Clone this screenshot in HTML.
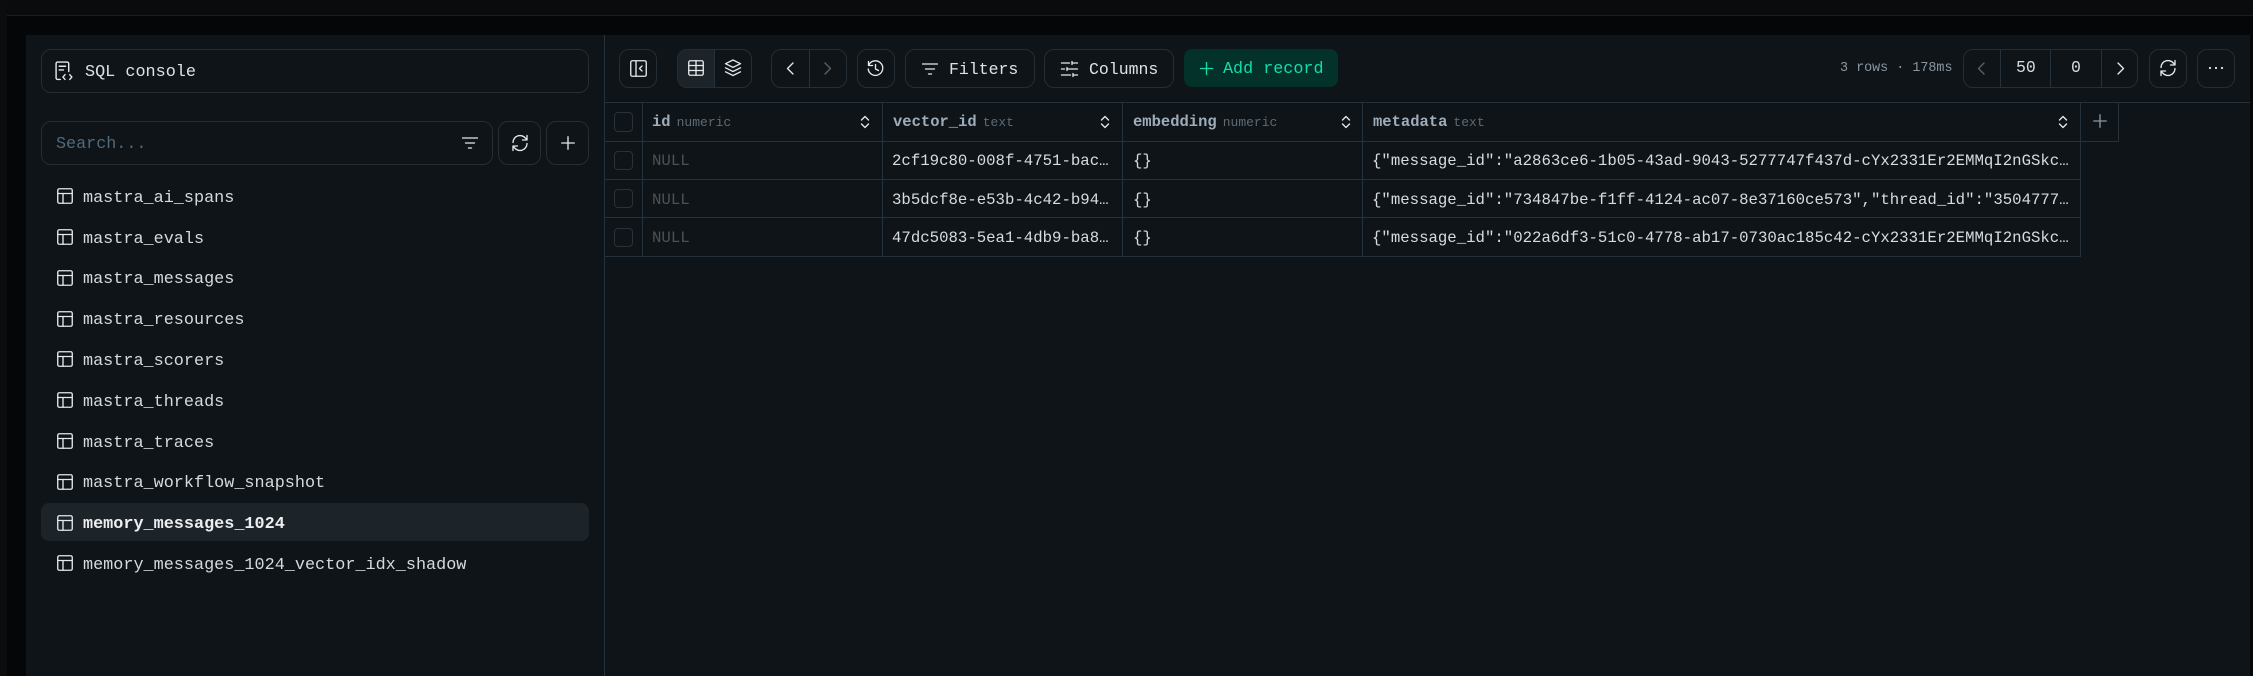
<!DOCTYPE html>
<html lang="en">
<head>
<meta charset="utf-8">
<title>Database</title>
<style>
html,body{margin:0;padding:0;width:2253px;height:676px;overflow:hidden;background:#050608}
body{position:relative;font-family:"Liberation Mono",monospace;color:#e3e6e8}
.a{position:absolute;box-sizing:border-box}
.t{position:absolute;white-space:pre;line-height:24px;height:24px}
.side{font-size:16.82px;color:#d6dadd;margin-top:1.5px}
.b{position:absolute;box-sizing:border-box;border:1.5px solid #232e37;border-radius:10px}
.ln{position:absolute;background:#25313b}
.ic{position:absolute;overflow:visible;fill:none;stroke:#e6e8ea;stroke-width:1.35;stroke-linecap:round;stroke-linejoin:round}
.th{font-size:15.5px;font-weight:bold;color:#9fadb9;margin-top:1px}
.th span{font-size:13px;font-weight:normal;color:#5c6a75;margin-left:6px}
.td{font-size:15.7px;color:#d8dcdf;margin-top:1px}
.nul{font-size:15.7px;color:#4c5154;margin-top:1px}
.cb{position:absolute;box-sizing:border-box;width:19px;height:19px;border:1.5px solid #27323c;border-radius:4px}
</style>
</head>
<body>
<svg width="0" height="0" style="position:absolute">
<defs>
<symbol id="tb" viewBox="0 0 16 16"><rect x=".75" y=".75" width="14.5" height="14.5" rx="1.5"/><path d="M.75 5.5h14.5M6 5.5v9.75"/></symbol>
<symbol id="rf" viewBox="0 0 18 18"><path d="M2 8.5A7 7 0 0 1 14.5 4.2L16 5.8M16 1.5v4.5h-4.5M16 9.5A7 7 0 0 1 3.5 13.8L2 12.2M2 16.5V12h4.5"/></symbol>
<symbol id="fl" viewBox="0 0 16 12"><path d="M.5 1h15M3.5 6h9M6.5 11h3"/></symbol>
<symbol id="so" viewBox="0 0 10 14"><path d="M1.500 5l3.500-3.500L8.500 5M1.500 9l3.500 3.500L8.500 9"/></symbol>
</defs>
</svg>

<!-- shell -->
<div class="a" style="left:0;top:0;width:7px;height:676px;background:#0c0c0d"></div>
<div class="a" style="left:7px;top:0;width:2246px;height:15px;background:#0a0b0d"></div>
<div class="a" style="left:7px;top:15px;width:2246px;height:1px;background:#1c1d20"></div>
<div class="a" style="left:26px;top:35px;width:2224px;height:641px;background:#0e1418"></div>
<div class="ln" style="left:604px;top:35px;width:1px;height:641px"></div>

<!-- sidebar -->
<div class="b" style="left:41px;top:49px;width:548px;height:44px"></div>
<svg class="ic" style="left:55px;top:61px" width="19" height="20" viewBox="0 0 18 19"><path d="M5 17.500H2.500a1.500 1.500 0 0 1-1.500-1.500V2.500A1.500 1.500 0 0 1 2.500 1h9A1.500 1.500 0 0 1 13 2.500V10M4 5h6M4 8.500h4M9.500 13l-2 2.250 2 2.250M14 13l2 2.250-2 2.250"/></svg>
<div class="t side" style="left:85px;top:59px;color:#dfe2e4">SQL console</div>

<div class="b" style="left:41px;top:121px;width:452px;height:44px"></div>
<div class="t" style="left:56px;top:133px;font-size:16.75px;color:#4f6a7e">Search...</div>
<svg class="ic" style="left:462px;top:137px" width="16" height="12"><use href="#fl"/></svg>
<div class="b" style="left:498px;top:121px;width:43px;height:44px"></div>
<svg class="ic" style="left:511px;top:134px" width="18" height="18"><use href="#rf"/></svg>
<div class="b" style="left:546px;top:121px;width:43px;height:44px"></div>
<svg class="ic" style="left:561px;top:136px" width="14" height="14" viewBox="0 0 14 14"><path d="M7 .75v12.500M.75 7h12.500"/></svg>

<div class="a" style="left:41px;top:503px;width:548px;height:38px;background:#1c2329;border-radius:8px"></div>

<svg class="ic" style="left:57px;top:188px" width="16" height="16"><use href="#tb"/></svg><div class="t side" style="left:83px;top:185px">mastra_ai_spans</div>
<svg class="ic" style="left:57px;top:229px" width="16" height="16"><use href="#tb"/></svg><div class="t side" style="left:83px;top:226px">mastra_evals</div>
<svg class="ic" style="left:57px;top:270px" width="16" height="16"><use href="#tb"/></svg><div class="t side" style="left:83px;top:266px">mastra_messages</div>
<svg class="ic" style="left:57px;top:311px" width="16" height="16"><use href="#tb"/></svg><div class="t side" style="left:83px;top:307px">mastra_resources</div>
<svg class="ic" style="left:57px;top:351px" width="16" height="16"><use href="#tb"/></svg><div class="t side" style="left:83px;top:348px">mastra_scorers</div>
<svg class="ic" style="left:57px;top:392px" width="16" height="16"><use href="#tb"/></svg><div class="t side" style="left:83px;top:389px">mastra_threads</div>
<svg class="ic" style="left:57px;top:433px" width="16" height="16"><use href="#tb"/></svg><div class="t side" style="left:83px;top:430px">mastra_traces</div>
<svg class="ic" style="left:57px;top:474px" width="16" height="16"><use href="#tb"/></svg><div class="t side" style="left:83px;top:470px">mastra_workflow_snapshot</div>
<svg class="ic" style="left:57px;top:515px" width="16" height="16"><use href="#tb"/></svg><div class="t side" style="left:83px;top:511px;font-weight:bold;color:#eceef0">memory_messages_1024</div>
<svg class="ic" style="left:57px;top:555px" width="16" height="16"><use href="#tb"/></svg><div class="t side" style="left:83px;top:552px">memory_messages_1024_vector_idx_shadow</div>

<!-- toolbar -->
<div class="b" style="left:619px;top:49px;width:38px;height:39px"></div>
<svg class="ic" style="left:630px;top:60px" width="17" height="17" viewBox="0 0 17 17"><rect x=".75" y=".75" width="15.500" height="15.500" rx="1.500"/><path d="M6 .75v15.500M12 6l-2.500 2.500 2.500 2.500"/></svg>

<div class="b" style="left:677px;top:49px;width:75px;height:39px"></div>
<div class="a" style="left:678px;top:50px;width:37px;height:37px;background:#1c2329;border-radius:9px 0 0 9px"></div>
<div class="ln" style="left:714px;top:50px;width:1px;height:37px"></div>
<svg class="ic" style="left:688px;top:60px" width="16" height="16" viewBox="0 0 16 16"><rect x=".75" y=".75" width="14.500" height="14.500" rx="1.500"/><path d="M.75 5.500h14.500M.75 10.500h14.500M8 .75v14.500"/></svg>
<svg class="ic" style="left:724px;top:59px" width="18" height="18" viewBox="0 0 18 18"><path d="M9 1l7.500 3.700L9 8.400 1.500 4.700zM1.500 8.800L9 12.500l7.500-3.700M1.500 12.800L9 16.500l7.500-3.700"/></svg>

<div class="b" style="left:771px;top:49px;width:76px;height:39px"></div>
<div class="ln" style="left:809px;top:50px;width:1px;height:37px"></div>
<svg class="ic" style="left:786px;top:62px" width="9" height="13" viewBox="0 0 9 13"><path d="M7 1L1.500 6.500 7 12"/></svg>
<svg class="ic" style="left:823px;top:62px;stroke:#5b6165" width="9" height="13" viewBox="0 0 9 13"><path d="M2 1l5.500 5.500L2 12"/></svg>

<div class="b" style="left:857px;top:49px;width:38px;height:39px"></div>
<svg class="ic" style="left:867px;top:60px" width="17" height="17" viewBox="0 0 17 17"><path d="M1.500 1.500v4h4M1.700 5.300A7.300 7.300 0 1 1 1.200 9M8.500 4.500v4.500l3 1.500"/></svg>

<div class="b" style="left:905px;top:49px;width:130px;height:39px"></div>
<svg class="ic" style="left:922px;top:63px" width="16" height="12"><use href="#fl"/></svg>
<div class="t" style="left:949px;top:58px;font-size:16.5px;color:#e0e3e5">Filters</div>

<div class="b" style="left:1044px;top:49px;width:130px;height:39px"></div>
<svg class="ic" style="left:1061px;top:61px" width="17" height="16" viewBox="0 0 17 16"><path d="M.5 2h8M12 2h4.500M11 .5v3M.5 8h3M7 8h9.500M6 6.500v3M.5 14h9M13 14h3.500M12 12.500v3"/></svg>
<div class="t" style="left:1089px;top:58px;font-size:16.5px;color:#e0e3e5">Columns</div>

<div class="a" style="left:1184px;top:49px;width:154px;height:38px;background:#02322a;border-radius:8px"></div>
<svg class="ic" style="left:1200px;top:62px;stroke:#14dcaa" width="13" height="13" viewBox="0 0 13 13"><path d="M6.500 .5v12M.5 6.500h12"/></svg>
<div class="t" style="left:1223px;top:58px;font-size:16.75px;color:#14dcaa">Add record</div>

<div class="t" style="left:1840px;top:57px;font-size:13.4px;color:#8a96a0">3 rows · 178ms</div>

<div class="b" style="left:1963px;top:49px;width:175px;height:39px"></div>
<div class="ln" style="left:2000px;top:50px;width:1px;height:37px"></div>
<div class="ln" style="left:2050px;top:50px;width:1px;height:37px"></div>
<div class="ln" style="left:2101px;top:50px;width:1px;height:37px"></div>
<svg class="ic" style="left:1977px;top:62px;stroke:#5b6165" width="9" height="13" viewBox="0 0 9 13"><path d="M7 1L1.500 6.500 7 12"/></svg>
<div class="t" style="left:2016px;top:56px;font-size:16.5px;color:#d8dcdf">50</div>
<div class="t" style="left:2071px;top:56px;font-size:16.5px;color:#d8dcdf">0</div>
<svg class="ic" style="left:2116px;top:62px" width="9" height="13" viewBox="0 0 9 13"><path d="M2 1l5.500 5.500L2 12"/></svg>

<div class="b" style="left:2149px;top:49px;width:38px;height:39px"></div>
<svg class="ic" style="left:2159px;top:59px" width="18" height="18"><use href="#rf"/></svg>
<div class="b" style="left:2197px;top:49px;width:38px;height:39px"></div>
<svg class="ic" style="left:2208px;top:66px;stroke:none;fill:#e6e8ea" width="16" height="4" viewBox="0 0 16 4"><circle cx="2" cy="2" r="1.100"/><circle cx="8" cy="2" r="1.100"/><circle cx="14" cy="2" r="1.100"/></svg>

<!-- table lines -->
<div class="ln" style="left:605px;top:102px;width:1645px;height:1px"></div>
<div class="ln" style="left:605px;top:141px;width:1514px;height:1px"></div>
<div class="ln" style="left:605px;top:179px;width:1476px;height:1px"></div>
<div class="ln" style="left:605px;top:217px;width:1476px;height:1px"></div>
<div class="ln" style="left:605px;top:256px;width:1476px;height:1px"></div>
<div class="ln" style="left:642px;top:102px;width:1px;height:154px"></div>
<div class="ln" style="left:882px;top:102px;width:1px;height:154px"></div>
<div class="ln" style="left:1122px;top:102px;width:1px;height:154px"></div>
<div class="ln" style="left:1362px;top:102px;width:1px;height:154px"></div>
<div class="ln" style="left:2080px;top:102px;width:1px;height:154px"></div>
<div class="ln" style="left:2118px;top:102px;width:1px;height:40px"></div>

<!-- checkboxes -->
<div class="cb" style="left:614px;top:112px;height:20px"></div>
<div class="cb" style="left:614px;top:151px"></div>
<div class="cb" style="left:614px;top:189px"></div>
<div class="cb" style="left:614px;top:228px"></div>

<!-- header -->
<div class="t th" style="left:652px;top:109px">id<span>numeric</span></div>
<div class="t th" style="left:893px;top:109px">vector_id<span>text</span></div>
<div class="t th" style="left:1133px;top:109px">embedding<span>numeric</span></div>
<div class="t th" style="left:1373px;top:109px">metadata<span>text</span></div>
<svg class="ic" style="left:860px;top:115px" width="10" height="14"><use href="#so"/></svg>
<svg class="ic" style="left:1100px;top:115px" width="10" height="14"><use href="#so"/></svg>
<svg class="ic" style="left:1341px;top:115px" width="10" height="14"><use href="#so"/></svg>
<svg class="ic" style="left:2058px;top:115px" width="10" height="14"><use href="#so"/></svg>
<svg class="ic" style="left:2093px;top:114px;stroke:#8b97a1" width="14" height="14" viewBox="0 0 14 14"><path d="M7 .75v12.500M.75 7h12.500"/></svg>

<!-- rows -->
<div class="t nul" style="left:652px;top:148px">NULL</div>
<div class="t td" style="left:892px;top:148px">2cf19c80-008f-4751-bac…</div>
<div class="t td" style="left:1133px;top:148px">{}</div>
<div class="t td" style="left:1372px;top:148px">{"message_id":"a2863ce6-1b05-43ad-9043-5277747f437d-cYx2331Er2EMMqI2nGSkc…</div>

<div class="t nul" style="left:652px;top:187px">NULL</div>
<div class="t td" style="left:892px;top:187px">3b5dcf8e-e53b-4c42-b94…</div>
<div class="t td" style="left:1133px;top:187px">{}</div>
<div class="t td" style="left:1372px;top:187px">{"message_id":"734847be-f1ff-4124-ac07-8e37160ce573","thread_id":"3504777…</div>

<div class="t nul" style="left:652px;top:225px">NULL</div>
<div class="t td" style="left:892px;top:225px">47dc5083-5ea1-4db9-ba8…</div>
<div class="t td" style="left:1133px;top:225px">{}</div>
<div class="t td" style="left:1372px;top:225px">{"message_id":"022a6df3-51c0-4778-ab17-0730ac185c42-cYx2331Er2EMMqI2nGSkc…</div>
</body>
</html>
